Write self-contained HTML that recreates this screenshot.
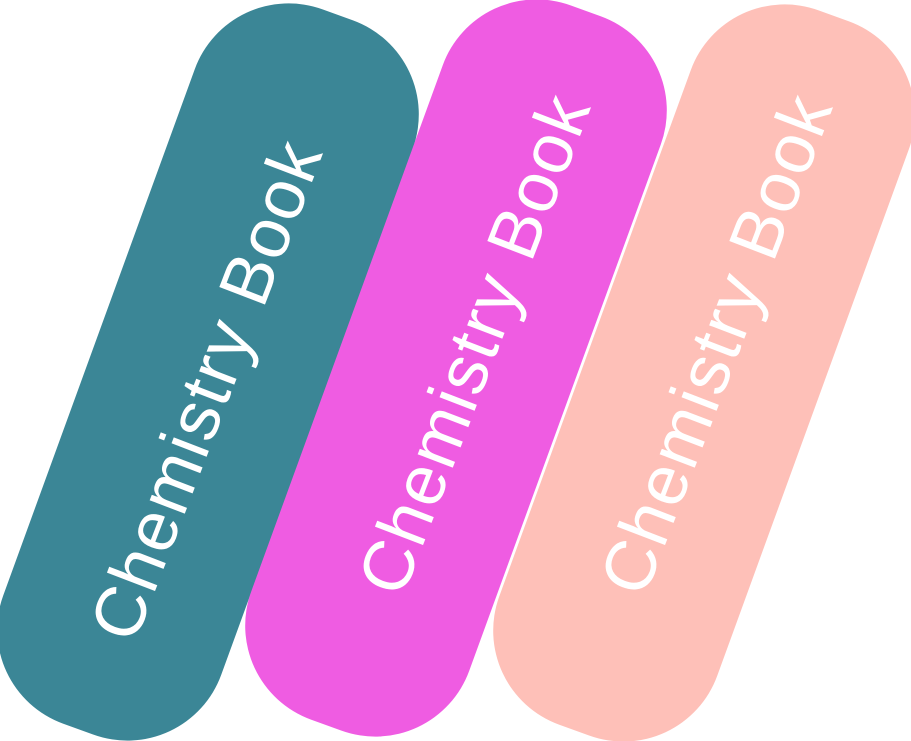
<!DOCTYPE html>
<html><head><style>
html,body{margin:0;padding:0;background:#fff;width:911px;height:741px;overflow:hidden;position:relative}
.b{position:absolute;width:232px;height:760px;border-radius:100px;transform:translate(-50%,-50%) rotate(20deg)}
.t{position:absolute;transform:translate(-50%,-50%) rotate(-69deg);color:#fff;font-family:"Liberation Sans",sans-serif;font-size:71px;white-space:nowrap;letter-spacing:2px}
</style></head><body>
<div class="b" style="left:208px;top:372px;background:#3b8696"></div>
<div class="b" style="left:456px;top:368px;background:#ef5ce2"></div>
<div class="b" style="left:704px;top:373px;background:#fec0b8"></div>
<div class="t" style="left:207px;top:390px">Chemistry Book</div>
<div class="t" style="left:475px;top:344px">Chemistry Book</div>
<div class="t" style="left:717px;top:344px">Chemistry Book</div>
</body></html>
